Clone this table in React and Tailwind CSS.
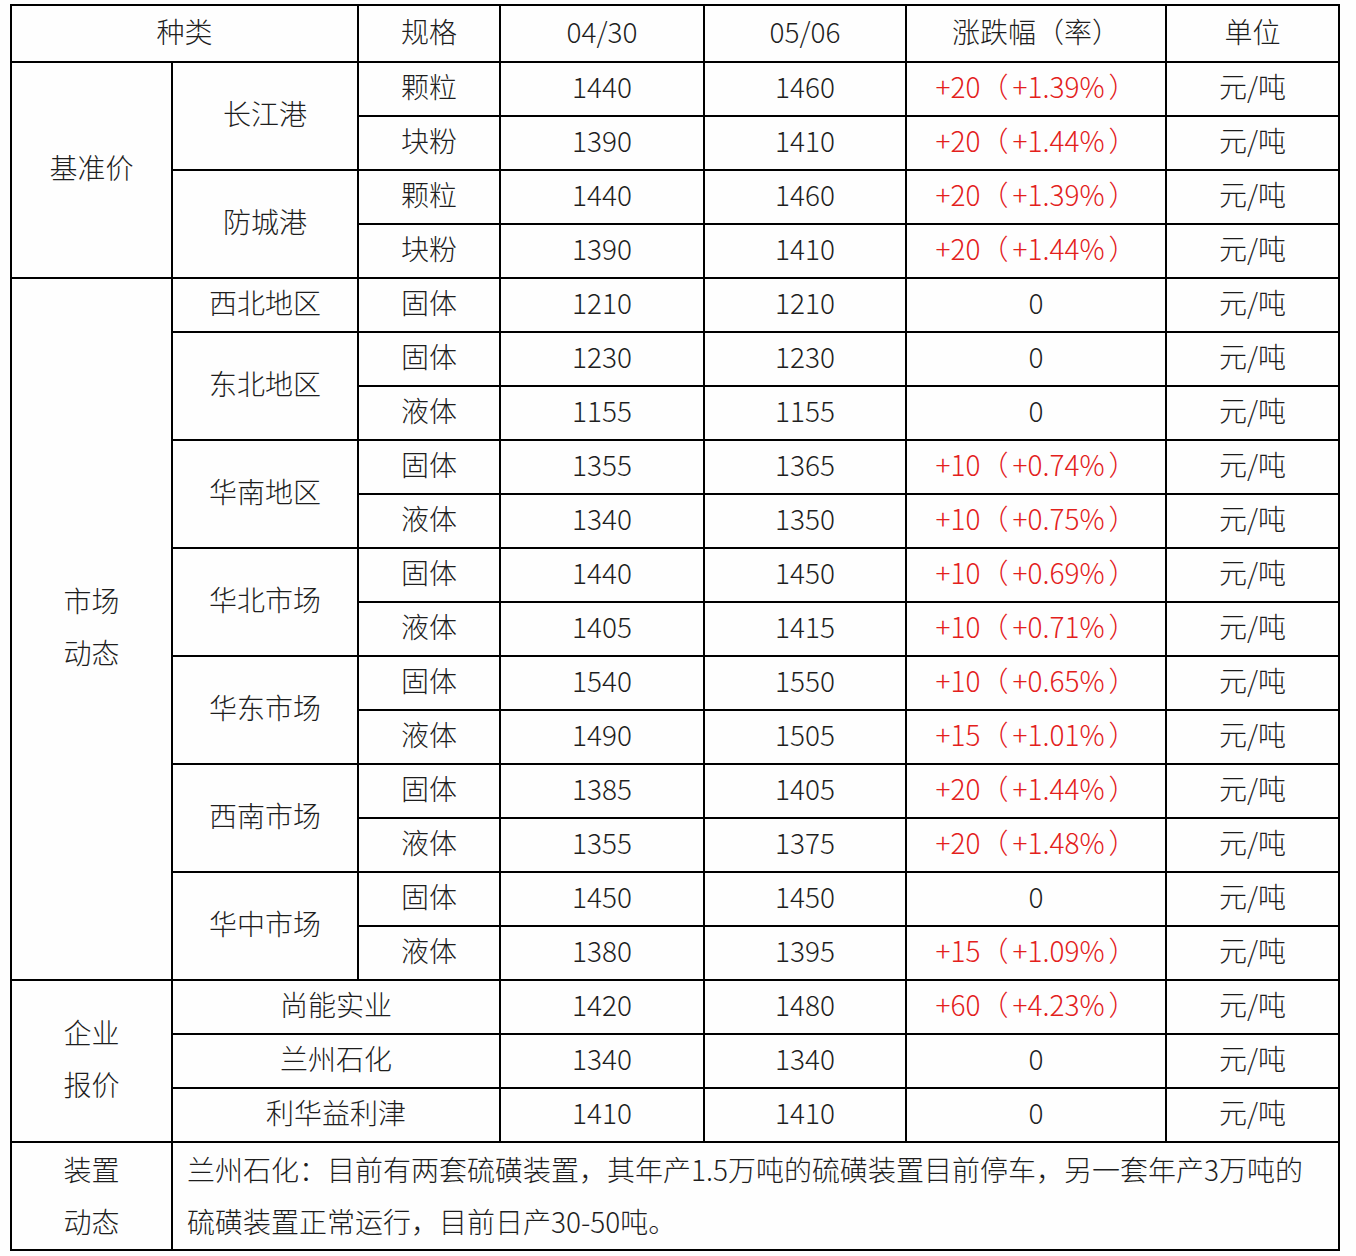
const cell = "border-2 border-black text-center align-middle p-0 pb-[6px]";

const groups = [
  {
    name: ["基准价"],
    subs: [
      { name: "长江港", rows: [["颗粒", "1440", "1460", "+20（+1.39%）"], ["块粉", "1390", "1410", "+20（+1.44%）"]] },
      { name: "防城港", rows: [["颗粒", "1440", "1460", "+20（+1.39%）"], ["块粉", "1390", "1410", "+20（+1.44%）"]] },
    ],
  },
  {
    name: ["市场", "动态"],
    subs: [
      { name: "西北地区", rows: [["固体", "1210", "1210", "0"]] },
      { name: "东北地区", rows: [["固体", "1230", "1230", "0"], ["液体", "1155", "1155", "0"]] },
      { name: "华南地区", rows: [["固体", "1355", "1365", "+10（+0.74%）"], ["液体", "1340", "1350", "+10（+0.75%）"]] },
      { name: "华北市场", rows: [["固体", "1440", "1450", "+10（+0.69%）"], ["液体", "1405", "1415", "+10（+0.71%）"]] },
      { name: "华东市场", rows: [["固体", "1540", "1550", "+10（+0.65%）"], ["液体", "1490", "1505", "+15（+1.01%）"]] },
      { name: "西南市场", rows: [["固体", "1385", "1405", "+20（+1.44%）"], ["液体", "1355", "1375", "+20（+1.48%）"]] },
      { name: "华中市场", rows: [["固体", "1450", "1450", "0"], ["液体", "1380", "1395", "+15（+1.09%）"]] },
    ],
  },
];

const companies = [
  ["尚能实业", "1420", "1480", "+60（+4.23%）"],
  ["兰州石化", "1340", "1340", "0"],
  ["利华益利津", "1410", "1410", "0"],
];

function Change({ v }) {
  if (v === "0") return <span>0</span>;
  const [a, b] = v.split("（");
  return (
    <span className="text-[#e3201b]">
      {a}
      <span className="tracking-[4px]">（</span>
      {b.replace("）", "")}
      <span className="pl-[4px]">）</span>
    </span>
  );
}

export default function App() {
  const rows = [];
  groups.forEach((g, gi) => {
    const total = g.subs.reduce((n, s) => n + s.rows.length, 0);
    g.subs.forEach((s, si) => {
      s.rows.forEach((r, ri) => {
        rows.push(
          <tr key={`${gi}-${si}-${ri}`} className="h-[54px]">
            {si === 0 && ri === 0 && (
              <td rowSpan={total} className={cell}>
                {g.name.map((t) => (
                  <div key={t} className="leading-[52px]">{t}</div>
                ))}
              </td>
            )}
            {ri === 0 && (
              <td rowSpan={s.rows.length} className={cell}>
                {s.name}
              </td>
            )}
            <td className={cell}>{r[0]}</td>
            <td className={cell}>{r[1]}</td>
            <td className={cell}>{r[2]}</td>
            <td className={cell}>
              <Change v={r[3]} />
            </td>
            <td className={cell}>元/吨</td>
          </tr>
        );
      });
    });
  });

  return (
    <div className="min-h-[1256px] w-[1356px] bg-[#fefefe] pl-[10px] pt-[4px] font-['Noto_Sans_CJK_SC','Noto_Sans',sans-serif] text-[28px] font-light text-[#1e1e1e]">
      <table className="w-[1328px] table-fixed border-collapse">
        <colgroup>
          <col className="w-[161px]" />
          <col className="w-[186px]" />
          <col className="w-[142px]" />
          <col className="w-[204px]" />
          <col className="w-[202px]" />
          <col className="w-[260px]" />
          <col className="w-[173px]" />
        </colgroup>
        <tbody>
          <tr className="h-[57px]">
            <td colSpan={2} className={cell}>种类</td>
            <td className={cell}>规格</td>
            <td className={cell}>04/30</td>
            <td className={cell}>05/06</td>
            <td className={cell}>涨跌幅（率）</td>
            <td className={cell}>单位</td>
          </tr>
          {rows}
          {companies.map((c, i) => (
            <tr key={c[0]} className="h-[54px]">
              {i === 0 && (
                <td rowSpan={3} className={cell}>
                  <div className="leading-[52px]">企业</div>
                  <div className="leading-[52px]">报价</div>
                </td>
              )}
              <td colSpan={2} className={cell}>{c[0]}</td>
              <td className={cell}>{c[1]}</td>
              <td className={cell}>{c[2]}</td>
              <td className={cell}>
                <Change v={c[3]} />
              </td>
              <td className={cell}>元/吨</td>
            </tr>
          ))}
          <tr className="h-[107px]">
            <td className="border-2 border-black p-0 pb-[2px] text-center align-middle">
              <div className="leading-[52px]">装置</div>
              <div className="leading-[52px]">动态</div>
            </td>
            <td colSpan={6} className="border-2 border-black pb-[2px] pl-[14px] pr-[30px] text-left align-middle leading-[52px]">
              兰州石化：目前有两套硫磺装置，其年产1.5万吨的硫磺装置目前停车，另一套年产3万吨的硫磺装置正常运行，目前日产30-50吨。
            </td>
          </tr>
        </tbody>
      </table>
    </div>
  );
}
